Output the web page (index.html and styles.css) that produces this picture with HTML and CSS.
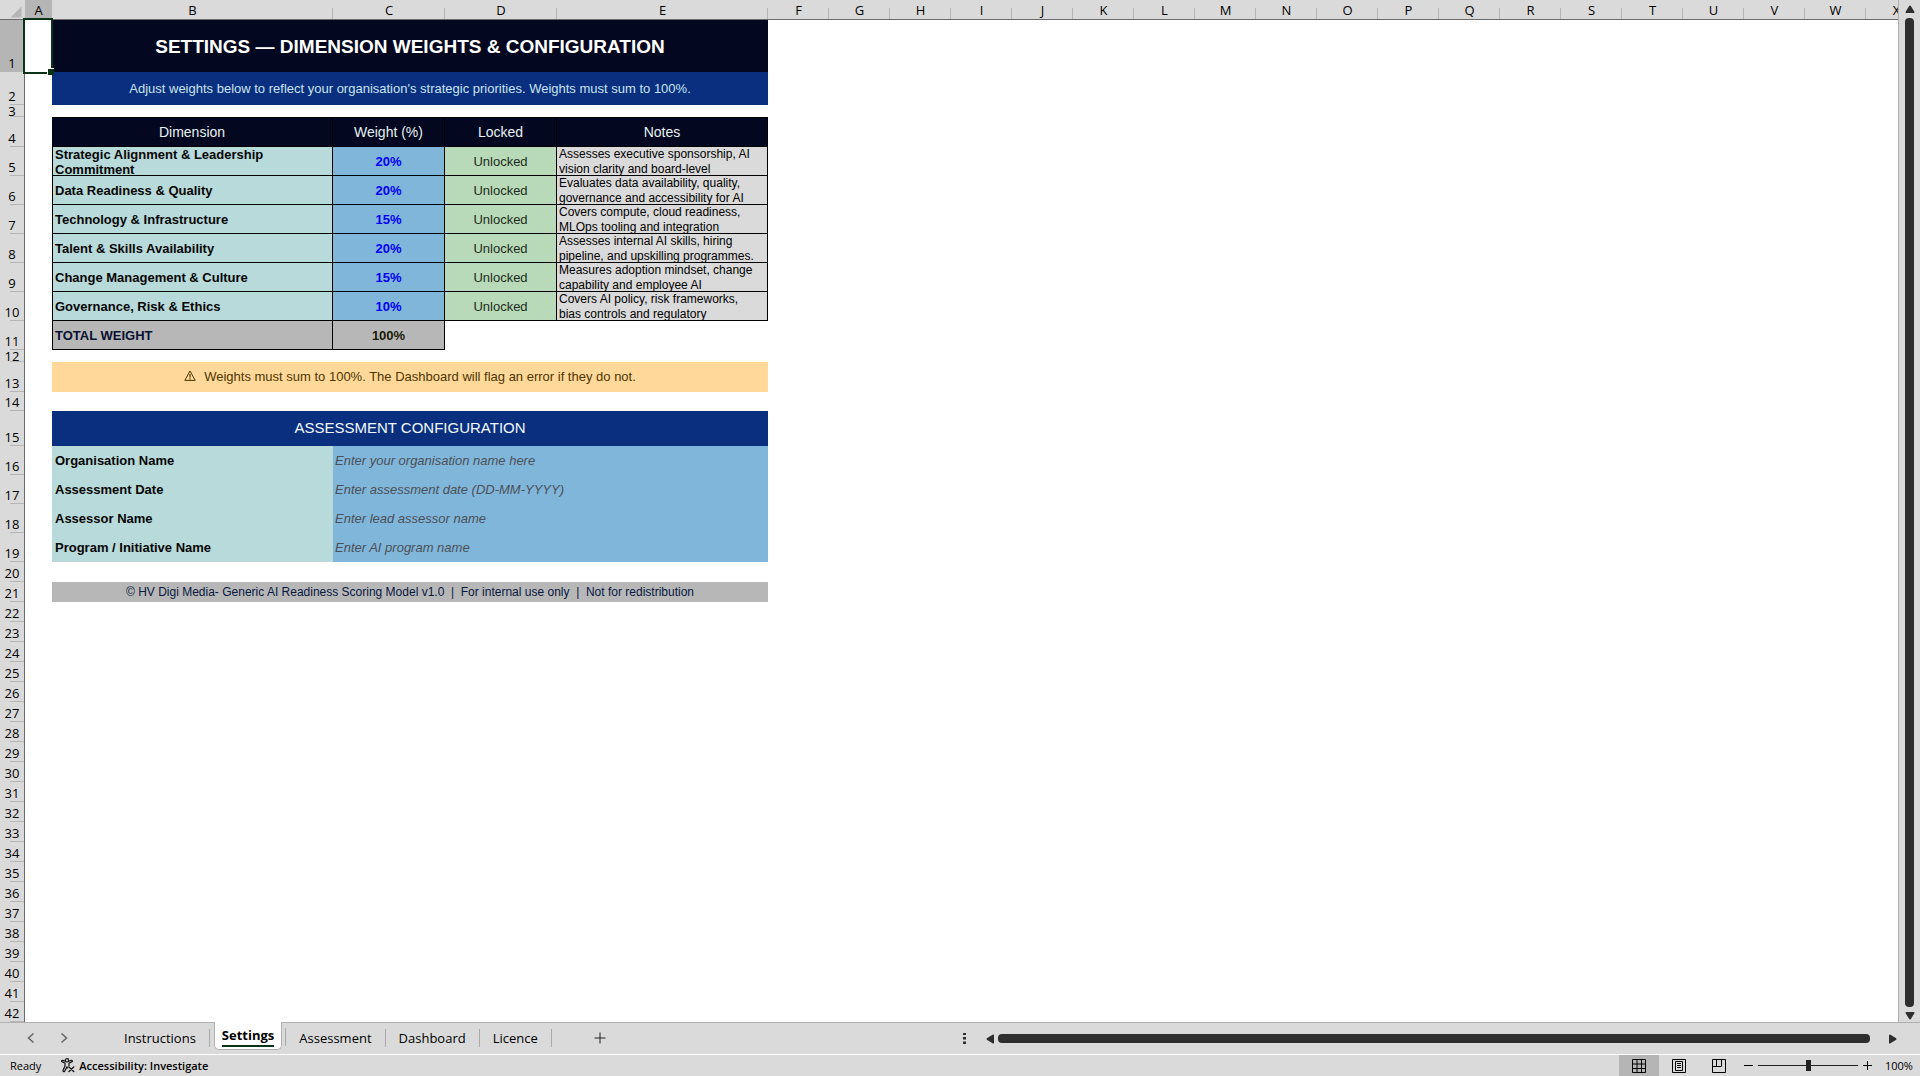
FILE: index.html
```html
<!DOCTYPE html>
<html lang="en">
<head>
<meta charset="utf-8">
<title>AI Readiness Scoring Model - Settings</title>
<link rel="stylesheet" href="styles.css">
</head>
<body>
<main class="workspace">
<div class="pane">
<table class="sheet">
<colgroup><col class="c-head"><col class="c-a"><col class="c-b"><col class="c-c"><col class="c-c"><col class="c-e"><col span="19" class="c-std"></colgroup>
<thead>
<tr><th class="corner"><svg width="12" height="12" viewBox="0 0 12 12"><path d="M11.500 0.500V11.500H0.500Z" fill="#b5b5b5"/></svg></th><th class="on">A</th><th>B</th><th>C</th><th>D</th><th>E</th><th>F</th><th>G</th><th>H</th><th>I</th><th>J</th><th>K</th><th>L</th><th>M</th><th>N</th><th>O</th><th>P</th><th>Q</th><th>R</th><th>S</th><th>T</th><th>U</th><th>V</th><th>W</th><th>X</th></tr>
</thead>
<tbody>
<tr class="r52"><th class="on">1</th><td class="active"><span class="cursor"></span></td><td colspan="4" class="title">SETTINGS — DIMENSION WEIGHTS &amp; CONFIGURATION</td></tr>
<tr class="r33"><th>2</th><td></td><td colspan="4" class="subtitle">Adjust weights below to reflect your organisation's strategic priorities. Weights must sum to 100%.</td></tr>
<tr class="r12"><th>3</th></tr>
<tr class="r30 head"><th>4</th><td></td><td class="first">Dimension</td><td>Weight (%)</td><td>Locked</td><td>Notes</td></tr>
<tr class="r29 data"><th>5</th><td></td><td class="dim wrap"><div class="clip">Strategic Alignment &amp; Leadership Commitment</div></td><td class="weight">20%</td><td class="lock">Unlocked</td><td class="note"><div class="clip">Assesses executive sponsorship, AI<br>vision clarity and board-level</div></td></tr>
<tr class="r29 data"><th>6</th><td></td><td class="dim">Data Readiness &amp; Quality</td><td class="weight">20%</td><td class="lock">Unlocked</td><td class="note"><div class="clip">Evaluates data availability, quality,<br>governance and accessibility for AI</div></td></tr>
<tr class="r29 data"><th>7</th><td></td><td class="dim">Technology &amp; Infrastructure</td><td class="weight">15%</td><td class="lock">Unlocked</td><td class="note"><div class="clip">Covers compute, cloud readiness,<br>MLOps tooling and integration</div></td></tr>
<tr class="r29 data"><th>8</th><td></td><td class="dim">Talent &amp; Skills Availability</td><td class="weight">20%</td><td class="lock">Unlocked</td><td class="note"><div class="clip">Assesses internal AI skills, hiring<br>pipeline, and upskilling programmes.</div></td></tr>
<tr class="r29 data"><th>9</th><td></td><td class="dim">Change Management &amp; Culture</td><td class="weight">15%</td><td class="lock">Unlocked</td><td class="note"><div class="clip">Measures adoption mindset, change<br>capability and employee AI</div></td></tr>
<tr class="r29 data"><th>10</th><td></td><td class="dim">Governance, Risk &amp; Ethics</td><td class="weight">10%</td><td class="lock">Unlocked</td><td class="note"><div class="clip">Covers AI policy, risk frameworks,<br>bias controls and regulatory</div></td></tr>
<tr class="r29 data"><th>11</th><td></td><td class="dim total">TOTAL WEIGHT</td><td class="weight total">100%</td></tr>
<tr class="r12"><th>12</th></tr>
<tr class="r30"><th>13</th><td></td><td colspan="4" class="warning"><svg width="12" height="11" viewBox="0 0 12 11" fill="none" stroke="#4d3600"><path d="M6 1L11.200 10.400H0.800Z"/><path d="M6 4V7.500M6 8.300V9.500" stroke-width="1.200"/></svg>Weights must sum to 100%. The Dashboard will flag an error if they do not.</td></tr>
<tr class="r19"><th>14</th></tr>
<tr class="r35"><th>15</th><td></td><td colspan="4" class="section">ASSESSMENT CONFIGURATION</td></tr>
<tr class="r29"><th>16</th><td></td><td class="key"><label for="org">Organisation Name</label></td><td colspan="3" class="field"><input id="org" type="text" placeholder="Enter your organisation name here"></td></tr>
<tr class="r29"><th>17</th><td></td><td class="key"><label for="date">Assessment Date</label></td><td colspan="3" class="field"><input id="date" type="text" placeholder="Enter assessment date (DD-MM-YYYY)"></td></tr>
<tr class="r29"><th>18</th><td></td><td class="key"><label for="assessor">Assessor Name</label></td><td colspan="3" class="field"><input id="assessor" type="text" placeholder="Enter lead assessor name"></td></tr>
<tr class="r29"><th>19</th><td></td><td class="key"><label for="program">Program / Initiative Name</label></td><td colspan="3" class="field"><input id="program" type="text" placeholder="Enter AI program name"></td></tr>
<tr><th>20</th></tr>
<tr><th>21</th><td></td><td colspan="4" class="footer">© HV Digi Media- Generic AI Readiness Scoring Model v1.0 &nbsp;|&nbsp; For internal use only &nbsp;|&nbsp; Not for redistribution</td></tr>
<tr><th>22</th></tr>
<tr><th>23</th></tr>
<tr><th>24</th></tr>
<tr><th>25</th></tr>
<tr><th>26</th></tr>
<tr><th>27</th></tr>
<tr><th>28</th></tr>
<tr><th>29</th></tr>
<tr><th>30</th></tr>
<tr><th>31</th></tr>
<tr><th>32</th></tr>
<tr><th>33</th></tr>
<tr><th>34</th></tr>
<tr><th>35</th></tr>
<tr><th>36</th></tr>
<tr><th>37</th></tr>
<tr><th>38</th></tr>
<tr><th>39</th></tr>
<tr><th>40</th></tr>
<tr><th>41</th></tr>
<tr><th>42</th></tr>
</tbody>
</table>
</div>
<div class="vscroll">
<button type="button" aria-label="Scroll up"><svg width="10" height="8" viewBox="0 0 10 8"><path d="M5 0.500Q5.600 0.500 6 1.200L9.500 7Q9.500 8 9 8H1Q0.500 8 0.500 7L4 1.200Q4.400 0.500 5 0.500Z"/></svg></button>
<span class="thumb"></span>
<button type="button" aria-label="Scroll down"><svg width="10" height="8" viewBox="0 0 10 8"><path d="M5 7.500Q5.600 7.500 6 6.800L9.500 1Q9.500 0 9 0H1Q0.500 0 0.500 1L4 6.800Q4.400 7.500 5 7.500Z"/></svg></button>
</div>
</main>
<nav class="tabbar">
<div class="arrows">
<button type="button" aria-label="Previous sheet"><svg width="8" height="12" viewBox="0 0 8 12"><path d="M6.500 1.500L1.500 6L6.500 10.500"/></svg></button>
<button type="button" aria-label="Next sheet"><svg width="8" height="12" viewBox="0 0 8 12"><path d="M1.500 1.500L6.500 6L1.500 10.500"/></svg></button>
</div>
<div class="tabs">
<button type="button" class="tab">Instructions</button>
<button type="button" class="tab current"><span>Settings</span></button>
<button type="button" class="tab">Assessment</button>
<button type="button" class="tab">Dashboard</button>
<button type="button" class="tab">Licence</button>
</div>
<button type="button" class="add" aria-label="New sheet"><svg width="12" height="12" viewBox="0 0 12 12"><path d="M6 0.500V11.500M0.500 6H11.500"/></svg></button>
<div class="hscroll">
<svg class="dots" width="3" height="11" viewBox="0 0 3 11"><path d="M0 0H3V2H0ZM0 4H3V6.500H0ZM0 8.500H3V11H0Z"/></svg>
<button type="button" aria-label="Scroll left"><svg width="8" height="10" viewBox="0 0 8 10"><path d="M0.500 5Q0.500 4.400 1.200 4L7 0.500Q8 0.500 8 1V9Q8 9.500 7 9.500L1.200 6Q0.500 5.600 0.500 5Z"/></svg></button>
<span class="thumb"></span>
<button type="button" aria-label="Scroll right"><svg width="8" height="10" viewBox="0 0 8 10"><path d="M7.500 5Q7.500 4.400 6.800 4L1 0.500Q0 0.500 0 1V9Q0 9.500 1 9.500L6.800 6Q7.500 5.600 7.500 5Z"/></svg></button>
</div>
</nav>
<footer class="status">
<span class="ready">Ready</span>
<button type="button" class="access"><svg width="14" height="15" viewBox="0 0 14 15"><circle cx="6" cy="2.300" r="1.700"/><path d="M4.300 3.300L1.700 2.300Q0.300 2.300 0.700 3.500L4 5.200V8L2 12.500Q2 14 3.500 13.600L6 9L7 10.500M7.700 3.300L10.300 2.300Q11.700 2.300 11.300 3.500L8 5.200V8M7.500 8.500L13.200 14M13.200 8.500L7.500 14"/></svg>Accessibility: Investigate</button>
<div class="views">
<button type="button" class="view chosen" aria-label="Normal view"><svg width="14" height="14" viewBox="0 0 14 14"><path d="M0.500 0.500H13.500V13.500H0.500ZM5 0.500V13.500M9.500 0.500V13.500M0.500 5H13.500M0.500 9.500H13.500"/></svg></button>
<button type="button" class="view" aria-label="Page layout"><svg width="14" height="14" viewBox="0 0 14 14"><path d="M0.500 0.500H13.500V13.500H0.500ZM3.500 2.500H10.500V11.500H3.500ZM5 4.500H9M5 6.500H9M5 8.500H9"/></svg></button>
<button type="button" class="view" aria-label="Page break preview"><svg width="14" height="14" viewBox="0 0 14 14"><path d="M0.500 0.500H13.500V13.500H0.500ZM4.500 0.500V7.500M9.500 0.500V7.500M0.500 7.500H9.500"/></svg></button>
</div>
<div class="zoom">
<button type="button" aria-label="Zoom out"><svg width="9" height="9" viewBox="0 0 9 9"><path d="M0 4.500H9"/></svg></button>
<input type="range" min="0" max="100" value="50" aria-label="Zoom">
<button type="button" aria-label="Zoom in"><svg width="9" height="9" viewBox="0 0 9 9"><path d="M0 4.500H9M4.500 0V9"/></svg></button>
</div>
<span class="percent">100%</span>
</footer>
</body>
</html>
```
FILE: styles.css
```css
* { box-sizing: border-box; }

html, body { height: 100%; }

body {
  margin: 0;
  display: flex;
  flex-direction: column;
  overflow: hidden;
  background: #dadada;
  color: #000;
  font-family: "Open Sans", "Noto Sans", sans-serif;
  font-size: 13px;
}

button {
  display: flex;
  align-items: center;
  justify-content: center;
  padding: 0;
  border: 0;
  background: none;
  color: inherit;
  font: inherit;
}

svg { display: block; }

.workspace {
  flex: 1;
  min-height: 0;
  display: flex;
}

.pane {
  flex: 1;
  min-width: 0;
  overflow: hidden;
  background: #fff;
  border-right: 1px solid #b0b0b0;
}

/* grid */
.sheet {
  width: 1927px;
  table-layout: fixed;
  border-collapse: separate;
  border-spacing: 0;
}

.c-head { width: 25px; }
.c-a { width: 27px; }
.c-b { width: 281px; }
.c-c { width: 112px; }
.c-e { width: 211px; }
.c-std { width: 61px; }

.sheet tr { height: 20px; }
.sheet .r12 { height: 12px; }
.sheet .r19 { height: 19px; }
.sheet .r29 { height: 29px; }
.sheet .r30 { height: 30px; }
.sheet .r33 { height: 33px; }
.sheet .r35 { height: 35px; }
.sheet .r52 { height: 52px; }

.sheet th {
  padding: 0;
  font-weight: 500;
  line-height: 18px;
  color: #000;
  background: linear-gradient(#b5b5b5, #b5b5b5) right bottom / 14px 1px no-repeat #dadada;
}

.sheet thead th {
  border-bottom: 1px solid #6b6b6b;
  background: linear-gradient(#b5b5b5, #b5b5b5) right bottom / 1px 11px no-repeat #dadada;
}

.sheet tbody th {
  vertical-align: bottom;
  border-right: 1px solid #6b6b6b;
}

.sheet .r12 th { line-height: 12px; }

.sheet th.on { background: #b5b5b5; }

.sheet thead .corner {
  padding: 5px 0 0 10px;
  background: #dadada;
}

td {
  padding: 0 2px;
  font-family: "Liberation Sans", Arial, sans-serif;
  font-size: 14px;
  line-height: 16px;
  vertical-align: middle;
}

.active { position: relative; }

.cursor {
  position: absolute;
  inset: -2px -1px -2px -2px;
  border: 2px solid #0b3317;
}

.cursor::after {
  content: "";
  position: absolute;
  right: -3px;
  bottom: -3px;
  width: 6px;
  height: 6px;
  background: #0b3317;
  border-top: 1px solid #fff;
  border-left: 1px solid #fff;
}

.title, .subtitle, .section, .warning, .footer { text-align: center; }

.title {
  padding-top: 2px;
  background: #040720;
  color: #fff;
  font-size: 19px;
  font-weight: 700;
}

.subtitle {
  background: #0a2f7e;
  color: #c8e4f0;
  font-size: 13px;
}

.section {
  padding-bottom: 2px;
  background: #0a2f7e;
  color: #f0fafa;
  font-size: 15px;
}

.warning {
  background: #ffd89a;
  color: #4d3600;
  font-size: 13px;
}

.warning svg {
  display: inline-block;
  margin-right: 8px;
}

.footer {
  background: #b7b7b7;
  color: #0a1840;
  font-size: 12px;
}

.head td:nth-child(n+3) {
  background: #040720;
  color: #e6f2f2;
  text-align: center;
  border: 1px solid #000;
  border-left: 0;
}

.data td:nth-child(n+3) {
  padding-top: 2px;
  border-right: 1px solid #000;
  border-bottom: 1px solid #000;
}

.data td.note, .data td.wrap {
  padding-top: 0;
  vertical-align: top;
}

.head .first, .data td.dim { border-left: 1px solid #000; }

.clip {
  height: 28px;
  overflow: hidden;
  line-height: 15px;
}

.dim, .key {
  background: #b8dada;
  color: #060606;
  font-size: 13px;
  font-weight: 700;
}

.key { padding-left: 3px; }

.weight {
  background: #80b6da;
  color: #0000f5;
  font-size: 13px;
  font-weight: 700;
  text-align: center;
}

.lock {
  background: #b8dab8;
  color: #1c2c1c;
  text-align: center;
  font-size: 13px;
}

.note {
  background: #dadada;
  color: #000;
  font-size: 12px;
}

.dim.total {
  background: #b7b7b7;
  color: #0a1030;
}

.weight.total {
  background: #b7b7b7;
  color: #1a1a08;
}

.field { background: #80b6da; }

.field input {
  display: block;
  width: 100%;
  height: 28px;
  padding: 0;
  border: 0;
  outline: 0;
  background: none;
  font: italic 13px "Liberation Sans", Arial, sans-serif;
}

.field input::placeholder {
  color: #4b5058;
  opacity: 1;
}

/* scroll bars */
.vscroll {
  width: 21px;
  padding: 5px 0 2px;
  display: flex;
  flex-direction: column;
  align-items: center;
  gap: 5px;
}

.thumb {
  flex: 1;
  border-radius: 4px;
  background: #2e2e2e;
}

.vscroll .thumb { width: 9px; }

.vscroll svg, .hscroll svg { fill: #2e2e2e; }

/* sheet tabs */
.tabbar {
  height: 32px;
  display: flex;
  align-items: flex-start;
  border-top: 1px solid #b0b0b0;
}

.arrows {
  display: flex;
  gap: 25px;
  padding: 9px 0 0 27px;
}

.arrows svg {
  fill: none;
  stroke: #666;
  stroke-width: 1.5;
}

.tabs {
  display: flex;
  margin-left: 43px;
}

.tab {
  position: relative;
  height: 30px;
  padding: 0 14px 0 13px;
}

.tab::after {
  content: "";
  position: absolute;
  right: 0;
  top: 6px;
  height: 18px;
  width: 1px;
  background: #aaa;
}

.tab.current {
  height: 28px;
  margin: -1px 4px 0;
  padding: 0 7px;
  border: 1px solid #b0b0b0;
  border-top: 0;
  border-radius: 0 0 5px 5px;
  background: #fff;
  font-weight: 700;
}

.tab.current::after { right: -5px; }

.tab.current span {
  line-height: 20px;
  border-bottom: 2px solid #0b3317;
}

.add { margin: 9px 0 0 42px; }

.add svg {
  stroke: #222;
  stroke-width: 1;
}

.hscroll {
  flex: 1;
  margin-left: 357px;
  padding: 10px 23px 0 0;
  display: flex;
  align-items: center;
}

.hscroll .dots { margin-right: 20px; }

.hscroll .thumb {
  height: 9px;
  margin: 0 19px 0 4px;
}

/* status bar */
.status {
  height: 22px;
  padding-left: 10px;
  display: flex;
  align-items: center;
  border-top: 1px solid #fff;
  font-size: 11px;
}

.access {
  gap: 4px;
  margin-left: 20px;
  font-weight: 600;
}

.access svg {
  fill: none;
  stroke: #111;
  stroke-width: 1.2;
}

.views {
  display: flex;
  align-self: stretch;
  margin-left: auto;
}

.view { width: 40px; }

.view svg, .zoom svg {
  fill: none;
  stroke: #000;
}

.chosen { background: #b5b5b5; }

.zoom {
  display: flex;
  align-items: center;
  gap: 5px;
  margin-left: 5px;
}

.zoom input {
  appearance: none;
  width: 100px;
  height: 11px;
  margin: 0;
  background: linear-gradient(#222, #222) center / 100% 1px no-repeat;
}

.zoom input::-webkit-slider-thumb {
  appearance: none;
  width: 5px;
  height: 11px;
  background: #222;
}

.percent {
  width: 48px;
  padding-left: 13px;
}
```
